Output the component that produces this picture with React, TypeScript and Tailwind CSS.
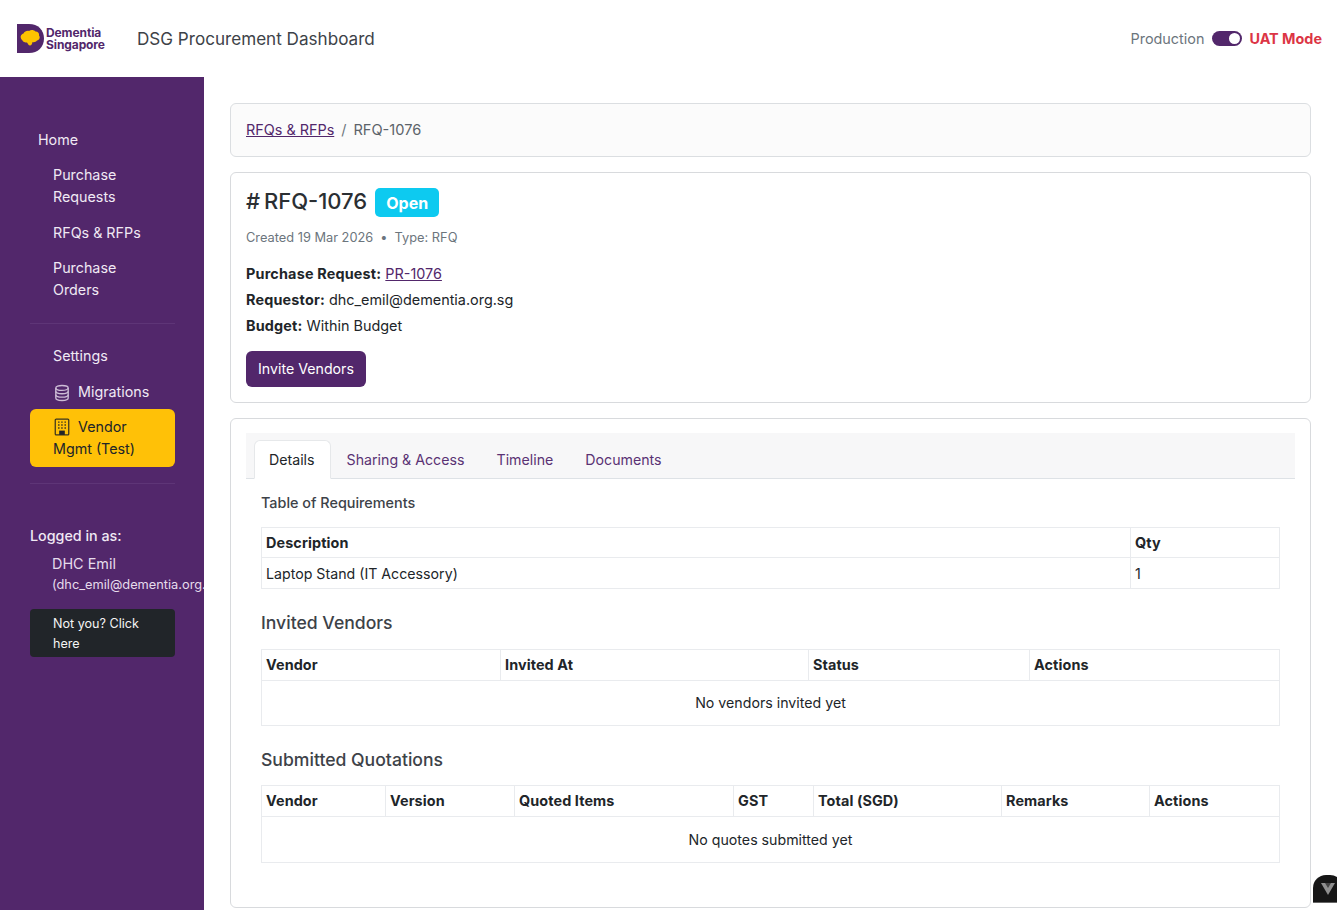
import React from "react";

function Th({ children, className = "" }: { children: React.ReactNode; className?: string }) {
  return <th className={`border border-[#e9ebee] px-[4px] text-left font-bold text-[14.4px] tracking-[0.1px] text-[#212529] ${className}`}>{children}</th>;
}

function Logo() {
  return (
    <div className="flex items-center w-[120px]">
      <svg width="28" height="29" viewBox="0 0 28 29" className="shrink-0">
        <path d="M0 0H12C21 0 27 6 27 14.500C27 23 21 29 12 29H0Z" fill="#52276b" />
        <path d="M4 14.500C3 12 4.500 10 6.500 9.500C7.500 7.500 10 6.500 12 7C14 5.500 17 6 18.500 7.500C21 7.500 22.500 9.500 22 11.500C23.500 13.500 22.500 16 20 16.500C19 18 17 18.500 15.500 18C15 20 14.500 21.500 13 21.500C11.500 21.500 11 19.500 10 18.500C8 18.500 6 18 5.500 16.500C4.800 16 4.200 15.300 4 14.500Z" fill="#fdc300" />
      </svg>
      <div className="ml-px font-bold text-[12px] leading-[12px] tracking-[-0.1px] text-[#52276b]">
        <div>Dementia</div>
        <div>Singapore</div>
      </div>
    </div>
  );
}

function Header() {
  return (
    <header className="h-[77px] bg-white flex items-center pl-[17px] pr-[15px]">
      <Logo />
      <div className="text-[17.1px] leading-[24px] text-[#3d4248]">DSG Procurement Dashboard</div>
      <div className="ml-auto flex items-center">
        <span className="text-[14.4px] text-[#6c757d]">Production</span>
        <span className="ml-[8px] w-[30px] h-[15px] rounded-full bg-[#52276b] flex items-center justify-end pr-[2px]">
          <span className="w-[11px] h-[11px] rounded-full bg-white" />
        </span>
        <span className="ml-[7px] text-[14.4px] font-bold text-[#dc3545]">UAT Mode</span>
      </div>
    </header>
  );
}

function NavItem({ children, className = "" }: { children: React.ReactNode; className?: string }) {
  return <a className={`block text-[14.3px] leading-[22px] text-[#f0e9f4] ${className}`}>{children}</a>;
}

function Sidebar() {
  return (
    <aside className="w-[204px] shrink-0 bg-[#52276b] min-h-[833px] overflow-hidden pt-[52px] pl-[30px] pr-[29px]">
      <NavItem className="pl-[8px]">Home</NavItem>
      <div className="pl-[23px] mt-[13px]">
        <NavItem>Purchase<br />Requests</NavItem>
        <NavItem className="mt-[14px]">RFQs &amp; RFPs</NavItem>
        <NavItem className="mt-[13px]">Purchase<br />Orders</NavItem>
      </div>
      <div className="border-t border-[#5e3577] mt-[22px]" />
      <NavItem className="pl-[23px] mt-[21px]">Settings</NavItem>
      <NavItem className="pl-[23px] mt-[14px] flex items-center">
        <svg width="18" height="18" viewBox="0 0 16 16" fill="none" stroke="#cdbcd6" strokeWidth="1.200" className="mr-[7px] mt-[2px]">
          <ellipse cx="8" cy="3.500" rx="5.500" ry="2.200" />
          <path d="M2.500 3.500V12.500C2.500 13.700 5 14.700 8 14.700S13.500 13.700 13.500 12.500V3.500" />
          <path d="M2.500 6.500C2.500 7.700 5 8.700 8 8.700S13.500 7.700 13.500 6.500" />
          <path d="M2.500 9.500C2.500 10.700 5 11.700 8 11.700S13.500 10.700 13.500 9.500" />
        </svg>
        Migrations
      </NavItem>
      <div className="mt-[6px] bg-[#ffc107] rounded-[6px] h-[58px] pl-[23px] pt-[7px] text-[14.3px] leading-[22px] text-[#212529]">
        <div className="flex items-center">
          <svg width="18" height="18" viewBox="0 0 16 16" className="mr-[7px]">
            <rect x="2" y="1" width="12" height="14" rx="0.800" fill="none" stroke="#3a3420" strokeWidth="1.100" />
            <path d="M4.500 3h1.300v1.300H4.500zM7.300 3h1.300v1.300H7.300zM10.200 3h1.300v1.300h-1.300zM4.500 5.600h1.300v1.300H4.500zM7.300 5.600h1.300v1.300H7.300zM10.200 5.600h1.300v1.300h-1.300zM4.500 8.200h1.300v1.300H4.500zM7.300 8.200h1.300v1.300H7.300zM10.200 8.200h1.300v1.300h-1.300z" fill="#3a3420" />
            <path d="M5.500 11.200h5V15h-5z" fill="#212529" />
          </svg>
          Vendor
        </div>
        <div>Mgmt (Test)</div>
      </div>
      <div className="border-t border-[#5e3577] mt-[16px]" />
      <div className="mt-[41px] text-[14.3px] leading-[22px] font-medium text-[#f0e9f4]">Logged in as:</div>
      <div className="pl-[22px] mt-[6px] text-[14.4px] leading-[22px] text-[#e6dcec] whitespace-nowrap">DHC Emil</div>
      <div className="pl-[22px] text-[12.8px] leading-[20px] text-[#e6dcec] whitespace-nowrap">(dhc_emil@dementia.org.sg)</div>
      <div className="mt-[14px] bg-[#212529] rounded-[4px] h-[48px] pl-[23px] pt-[5px] text-[12.6px] leading-[20px] text-[#f4f4f4]">
        Not you? Click<br />here
      </div>
    </aside>
  );
}

function Tab({ children, active }: { children: React.ReactNode; active?: boolean }) {
  return active ? (
    <div className="h-[39px] pl-[14px] pr-[15px] pt-px flex items-center text-[14.2px] text-[#212529] bg-white border border-[#e6e8ea] border-b-white rounded-t-[6px] -mb-px">{children}</div>
  ) : (
    <div className="h-[38px] px-[16px] pt-px flex items-center text-[14.2px] text-[#5a3274]">{children}</div>
  );
}

function Main() {
  return (
    <main className="flex-1 bg-white pt-[26px] px-[26px] flex flex-col gap-[15px]">
      <div className="h-[54px] border border-[#dbdee1] rounded-[6px] bg-[#fbfbfb] px-[15px] flex items-center text-[14.4px] text-[#212529]">
        <a className="text-[#52276b] underline">RFQs &amp; RFPs</a>
        <span className="mx-[7px] text-[#6c757d]">/</span>
        <span className="pt-px text-[14.6px] text-[#5c636a]">RFQ-1076</span>
      </div>

      <section className="h-[231px] border border-[#d8dadd] rounded-[6px] px-[15px] pt-[12px]">
        <div className="flex items-center">
          <h1 className="text-[22px] leading-[32px] font-medium [word-spacing:-2px] text-[#2b2f33]"># RFQ-1076</h1>
          <span className="ml-[8px] mt-[3px] h-[29px] w-[64px] rounded-[5px] bg-[#0dcaf0] text-white font-bold text-[16px] flex items-center justify-center">Open</span>
        </div>
        <div className="mt-[11px] text-[12.8px] leading-[20px] text-[#6c757d]">
          Created 19 Mar 2026 <span className="mx-[3.5px]">•</span> Type: RFQ
        </div>
        <div className="mt-[13px] text-[14.4px] leading-[26px] text-[#212529]">
          <div><b className="font-bold tracking-[0.18px]">Purchase Request:</b> <a className="text-[#52276b] underline">PR-1076</a></div>
          <div><b className="font-bold tracking-[0.18px]">Requestor:</b> dhc_emil@dementia.org.sg</div>
          <div><b className="font-bold tracking-[0.18px]">Budget:</b> Within Budget</div>
        </div>
        <button className="mt-[12px] h-[36px] w-[120px] rounded-[6px] bg-[#52276b] text-white text-[14.2px]">Invite Vendors</button>
      </section>

      <section className="h-[490px] border border-[#d8dadd] rounded-[6px] px-[15px] pt-[14px]">
        <div className="h-[46px] bg-[#f7f7f8] border-b border-[#dee2e6] flex items-end pl-[8px]">
          <Tab active>Details</Tab>
          <Tab>Sharing &amp; Access</Tab>
          <Tab>Timeline</Tab>
          <Tab>Documents</Tab>
        </div>
        <div className="px-[15px]">
          <div className="mt-[14px] text-[14.4px] leading-[20px] font-medium text-[#3d4248]">Table of Requirements</div>
          <table className="w-full mt-[14px] border-collapse table-fixed">
            <thead>
              <tr className="h-[30px]"><Th>Description</Th><Th className="w-[149px]">Qty</Th></tr>
            </thead>
            <tbody>
              <tr className="h-[31px]">
                <td className="border border-[#e9ebee] px-[4px] pt-[2px] text-[14.2px] text-[#212529]">Laptop Stand (IT Accessory)</td>
                <td className="border border-[#e9ebee] px-[4px] pt-[2px] text-[14.2px] text-[#212529]">1</td>
              </tr>
            </tbody>
          </table>

          <h2 className="mt-[22px] text-[17.6px] leading-[24px] font-medium text-[#3d4248]">Invited Vendors</h2>
          <table className="w-full mt-[14px] border-collapse table-fixed">
            <thead>
              <tr className="h-[31px]">
                <Th className="w-[239px]">Vendor</Th>
                <Th className="w-[308px]">Invited At</Th>
                <Th className="w-[221px]">Status</Th>
                <Th>Actions</Th>
              </tr>
            </thead>
            <tbody>
              <tr className="h-[45px]"><td colSpan={4} className="border border-[#e9ebee] text-center text-[14.2px] text-[#212529]">No vendors invited yet</td></tr>
            </tbody>
          </table>

          <h2 className="mt-[22px] text-[17.6px] leading-[24px] font-medium text-[#3d4248]">Submitted Quotations</h2>
          <table className="w-full mt-[13px] border-collapse table-fixed">
            <thead>
              <tr className="h-[31px]">
                <Th className="w-[124px]">Vendor</Th>
                <Th className="w-[129px]">Version</Th>
                <Th className="w-[219px]">Quoted Items</Th>
                <Th className="w-[80px]">GST</Th>
                <Th className="w-[188px]">Total (SGD)</Th>
                <Th className="w-[148px]">Remarks</Th>
                <Th>Actions</Th>
              </tr>
            </thead>
            <tbody>
              <tr className="h-[46px]"><td colSpan={7} className="border border-[#e9ebee] text-center text-[14.2px] text-[#212529]">No quotes submitted yet</td></tr>
            </tbody>
          </table>
        </div>
      </section>
    </main>
  );
}

export default function App() {
  return (
    <div className="relative h-[910px] w-[1337px] overflow-hidden bg-white font-['Inter',sans-serif]">
      <Header />
      <div className="flex">
        <Sidebar />
        <Main />
      </div>
      <div className="absolute left-[1313px] top-[875px] w-[30px] h-[28px] rounded-t-[13px] bg-[#161616] border-b border-[#666] flex items-center pl-[7px]">
        <svg width="16" height="14" viewBox="0 0 16 14"><path d="M1 1H15L8 13Z" fill="#8f8f8f" /><path d="M5 1H11L8 6Z" fill="#444" /></svg>
      </div>
    </div>
  );
}
